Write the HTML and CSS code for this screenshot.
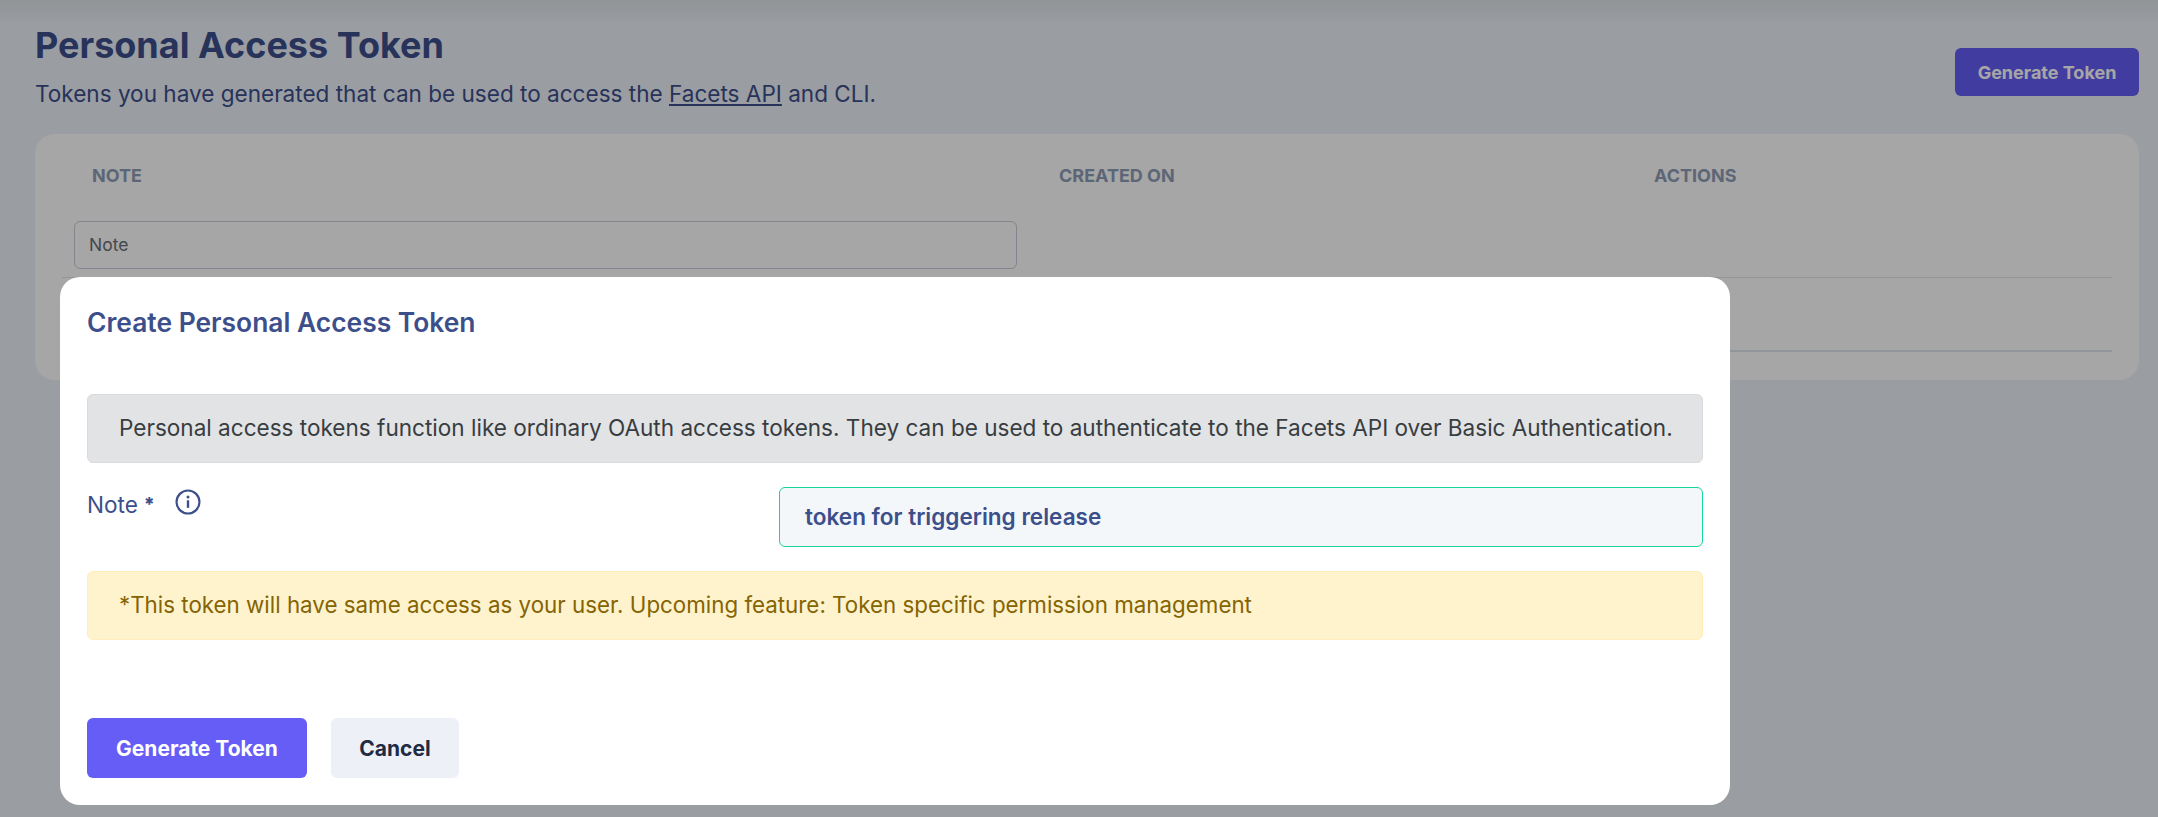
FILE: index.html
```html
<!DOCTYPE html>
<html lang="en">
<head>
<meta charset="utf-8">
<title>Personal Access Token</title>
<link rel="stylesheet" href="styles.css">
</head>
<body>
<main class="page">
  <div class="top-shade"></div>
  <header class="page-head">
    <div>
      <h1 class="page-title">Personal Access Token</h1>
      <p class="page-sub">Tokens you have generated that can be used to access the <a href="#" class="link">Facets API</a> and CLI.</p>
    </div>
    <button class="btn btn-primary btn-small" type="button">Generate Token</button>
  </header>
  <section class="card">
    <div class="table-head">
      <div class="col col-note">NOTE</div>
      <div class="col col-created">CREATED ON</div>
      <div class="col col-actions">ACTIONS</div>
    </div>
    <div class="filter-row">
      <div class="filter-input">Note</div>
    </div>
    <div class="row-empty"></div>
  </section>
</main>
<div class="backdrop">
  <div class="modal">
    <h2 class="modal-title">Create Personal Access Token</h2>
    <div class="alert alert-gray">Personal access tokens function like ordinary OAuth access tokens. They can be used to authenticate to the Facets API over Basic Authentication.</div>
    <div class="form-row">
      <div class="form-label">
        <span class="label-text">Note</span><span class="req">*</span>
        <svg class="info" viewBox="0 0 24 24" width="26" height="26" aria-hidden="true">
          <circle cx="12" cy="12" r="10.6" fill="none" stroke="currentColor" stroke-width="2"/>
          <rect x="10.9" y="10.4" width="2.2" height="7" fill="currentColor"/>
          <circle cx="12" cy="7.4" r="1.4" fill="currentColor"/>
        </svg>
      </div>
      <div class="text-input">token for triggering release</div>
    </div>
    <div class="alert alert-yellow">*This token will have same access as your user. Upcoming feature: Token specific permission management</div>
    <div class="modal-actions">
      <button class="btn btn-primary btn-large" type="button">Generate Token</button>
      <button class="btn btn-cancel btn-large" type="button">Cancel</button>
    </div>
  </div>
</div>
</body>
</html>
```
FILE: styles.css
```css
* { box-sizing: border-box; }
html, body { margin: 0; height: 817px; overflow: hidden; }
body { background: #edf2f9; font-family: Inter, "Liberation Sans", sans-serif; color: #3d4f8b; }

.page { position: relative; height: 817px; padding: 24px 19px 0 35px; }
.top-shade { position: absolute; left: 0; right: 0; top: 0; height: 24px; background: linear-gradient(to bottom, #dfe3e6, #edf2f9); }
.page-head { position: relative; display: flex; justify-content: space-between; align-items: flex-start; height: 110px; }
.page-title { margin: 0; font-size: 36px; line-height: 43px; font-weight: 700; color: #3d4f8b; }
.page-sub { margin: 11px 0 0; font-size: 22.55px; line-height: 32px; color: #3d4f8b; }
.link { color: inherit; text-decoration: underline; }

.btn { border: 0; border-radius: 6px; font-family: inherit; font-weight: 700; display: block; }
.btn-primary { background: #655df6; color: #fff; }
.btn-small { width: 184px; height: 48px; margin-top: 24px; font-size: 18px; }
.btn-large { height: 60px; font-size: 21px; padding: 0; }
.modal-actions .btn-primary { width: 220px; }
.btn-cancel { width: 128px; background: #edf0f7; color: #1f2a44; }

.card { position: relative; height: 246px; background: #fff; border-radius: 20px; padding: 0 27px; }
.table-head { display: flex; height: 83px; align-items: center; font-size: 18px; font-weight: 700; color: #8e9db5; }
.col-note { width: 997px; padding-left: 30px; }
.col-created { width: 595px; }
.filter-row { padding: 4px 0 9px 12px; height: 61px; border-bottom: 1px solid #e1e6ef; }
.filter-input { width: 943px; height: 48px; border: 1px solid #c8cdd6; border-radius: 6px; padding: 0 14px; line-height: 46px; font-size: 17.5px; color: #6b6f76; }
.row-empty { height: 74px; border-bottom: 2px solid #e1e6ef; }

.backdrop { position: absolute; inset: 0; background: rgba(0, 0, 0, .35); padding: 277px 0 0 60px; }
.modal { width: 1670px; height: 528px; background: #fff; border-radius: 20px; padding: 0 27px; }
.modal-title { margin: 0; height: 117px; padding-top: 28px; font-size: 26.4px; line-height: 34px; font-weight: 600; color: #3d4f8b; }

.alert { height: 69px; border-radius: 6px; padding: 0 0 2px 31px; display: flex; align-items: center; white-space: nowrap; }
.alert-gray { background: #e2e3e5; border: 1px solid #d9dadd; color: #383d41; font-size: 22.55px; }
.alert-yellow { background: #fff3cd; border: 1px solid #ffeeba; color: #856404; font-size: 22.35px; }

.form-row { display: flex; justify-content: space-between; margin: 24px 0; height: 60px; }
.form-label { display: flex; align-items: flex-start; font-size: 22.55px; line-height: 36px; color: #3d4f8b; }
.req { margin-left: 6px; font-weight: 800; font-size: 19px; }
.info { margin: 2px 0 0 20px; }
.text-input { width: 924px; height: 60px; border: 1px solid #17d49b; border-radius: 6px; background: #f3f7fa; padding: 0 25px; line-height: 58px; font-size: 22.55px; font-weight: 600; color: #3d4f8b; }

.modal-actions { display: flex; gap: 24px; margin-top: 78px; }
```
